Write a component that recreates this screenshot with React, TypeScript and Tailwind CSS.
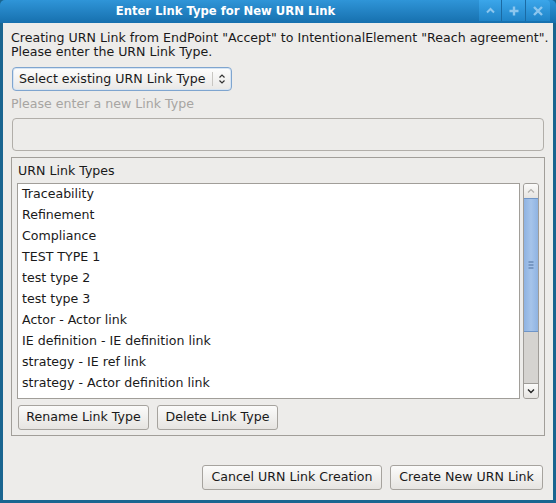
import React from "react";

const items = [
  "Traceability",
  "Refinement",
  "Compliance",
  "TEST TYPE 1",
  "test type 2",
  "test type 3",
  "Actor - Actor link",
  "IE definition - IE definition link",
  "strategy - IE ref link",
  "strategy - Actor definition link",
];

function Btn({ children, className = "" }: { children: React.ReactNode; className?: string }) {
  return (
    <div
      className={
        "h-[25px] flex items-center justify-center rounded-[3px] border border-[#a6a39e] bg-gradient-to-b from-[#fbfbfa] to-[#e6e4e1] text-[#1a1a1a] " +
        className
      }
    >
      {children}
    </div>
  );
}

export default function App() {
  return (
    <div
      className="w-[556px] h-[503px] flex flex-col bg-[#1a6590] text-[12.6px] text-[#1a1a1a]"
      style={{ fontFamily: '"DejaVu Sans", sans-serif' }}
    >
      {/* title bar */}
      <div className="h-[23px] flex items-stretch rounded-t-[5px] bg-gradient-to-b from-[#2f95d8] to-[#1670ae] relative">
        <div className="flex-1 flex items-center justify-center pr-[28px] font-bold text-white text-[11.6px]">
          Enter Link Type for New URN Link
        </div>
        <div className="flex items-stretch mr-[6px] h-[21px]">
          <div className="w-[23px] flex items-center justify-center bg-gradient-to-b from-[#3ba6ea] to-[#1f84c8] border-r border-[#1b6aa3]">
            <svg width="9" height="7" viewBox="0 0 9 7">
              <path d="M1 5.5 L4.5 2 L8 5.5" stroke="#8cc6ee" strokeWidth="2" fill="none" />
            </svg>
          </div>
          <div className="w-[24px] flex items-center justify-center bg-gradient-to-b from-[#3ba6ea] to-[#1f84c8] border-r border-[#1b6aa3]">
            <svg width="10" height="10" viewBox="0 0 10 10">
              <path d="M5 0.5 V9.5 M0.5 5 H9.5" stroke="#8cc6ee" strokeWidth="2.4" fill="none" />
            </svg>
          </div>
          <div className="w-[24px] flex items-center justify-center bg-gradient-to-b from-[#3ba6ea] to-[#1f84c8] rounded-tr-[4px]">
            <svg width="10" height="10" viewBox="0 0 10 10">
              <path d="M1 1 L9 9 M9 1 L1 9" stroke="#8cc6ee" strokeWidth="2.4" fill="none" />
            </svg>
          </div>
        </div>
      </div>
      {/* content */}
      <div className="flex-1 mx-[3px] mb-[3px] bg-[#edecea] flex flex-col px-[8px] pt-[8px] pb-[10px] overflow-hidden">
        <div className="leading-[14px] whitespace-nowrap">
          <div>Creating URN Link from EndPoint "Accept" to IntentionalElement "Reach agreement".</div>
          <div>Please enter the URN Link Type.</div>
        </div>
        <div className="mt-[8px] ml-[1px] w-[220px] h-[24px] flex items-center rounded-[4px] border border-[#7fa5cf] bg-gradient-to-b from-[#fdfdfd] to-[#e9e8e6] shadow-[inset_0_0_0_1px_#d6e4f3]">
          <span className="pl-[6px] flex-1 whitespace-nowrap">Select existing URN Link Type</span>
          <div className="w-px h-[14px] bg-[#c8c6c2]" />
          <svg width="14" height="14" viewBox="0 0 14 14" className="mx-[2px]">
            <path d="M4.5 5.5 L7 3 L9.5 5.5 M4.5 8.5 L7 11 L9.5 8.5" stroke="#333" strokeWidth="1.2" fill="none" />
          </svg>
        </div>
        <div className="mt-[6px] leading-[14px] text-[#a7a5a2]">Please enter a new Link Type</div>
        <div className="mt-[7px] mx-[1px] h-[33px] rounded-[4px] border border-[#b1aea9] bg-[#edecea]" />
        <div className="mt-[6px] h-[279px] border border-[#a19e99] flex flex-col px-[5px] pb-[5px]">
          <div className="leading-[14px] mt-[6px] pl-[1px]">URN Link Types</div>
          <div className="mt-[5px] flex h-[216px]">
            <div className="flex-1 bg-white border border-[#a19e99]">
              {items.map((t) => (
                <div key={t} className="h-[21px] leading-[20px] pl-[4px]">
                  {t}
                </div>
              ))}
            </div>
            <div className="ml-[3px] w-[16px] flex flex-col rounded-[3px] border border-[#9f9c98] bg-[#d5d3d0] overflow-hidden">
              <div className="h-[14px] flex items-center justify-center bg-gradient-to-b from-[#fbfbfa] to-[#e6e4e1]">
                <svg width="8" height="6" viewBox="0 0 8 6">
                  <path d="M1 4.5 L4 1.5 L7 4.5" stroke="#b2b0ad" strokeWidth="1.2" fill="none" />
                </svg>
              </div>
              <div className="h-[134px] bg-gradient-to-r from-[#8fb3e2] via-[#a6c4ea] to-[#8fb3e2] border-y border-[#6f95c8] flex items-center justify-center">
                <svg width="6" height="8" viewBox="0 0 6 8">
                  <path d="M0.5 1 H5.5 M0.5 4 H5.5 M0.5 7 H5.5" stroke="#4d6f9c" strokeWidth="1" />
                </svg>
              </div>
              <div className="flex-1" />
              <div className="h-[15px] flex items-center justify-center bg-gradient-to-b from-[#fbfbfa] to-[#e6e4e1] border-t border-[#9f9c98]">
                <svg width="8" height="6" viewBox="0 0 8 6">
                  <path d="M1 1.5 L4 4.5 L7 1.5" stroke="#222" strokeWidth="1.4" fill="none" />
                </svg>
              </div>
            </div>
          </div>
          <div className="mt-[6px] flex gap-[8px] pl-[1px]">
            <Btn className="w-[131px]">Rename Link Type</Btn>
            <Btn className="w-[121px]">Delete Link Type</Btn>
          </div>
        </div>
        <div className="flex-1" />
        <div className="flex justify-end gap-[8px] pr-[2px]">
          <Btn className="w-[180px]">Cancel URN Link Creation</Btn>
          <Btn className="w-[153px]">Create New URN Link</Btn>
        </div>
      </div>
    </div>
  );
}
